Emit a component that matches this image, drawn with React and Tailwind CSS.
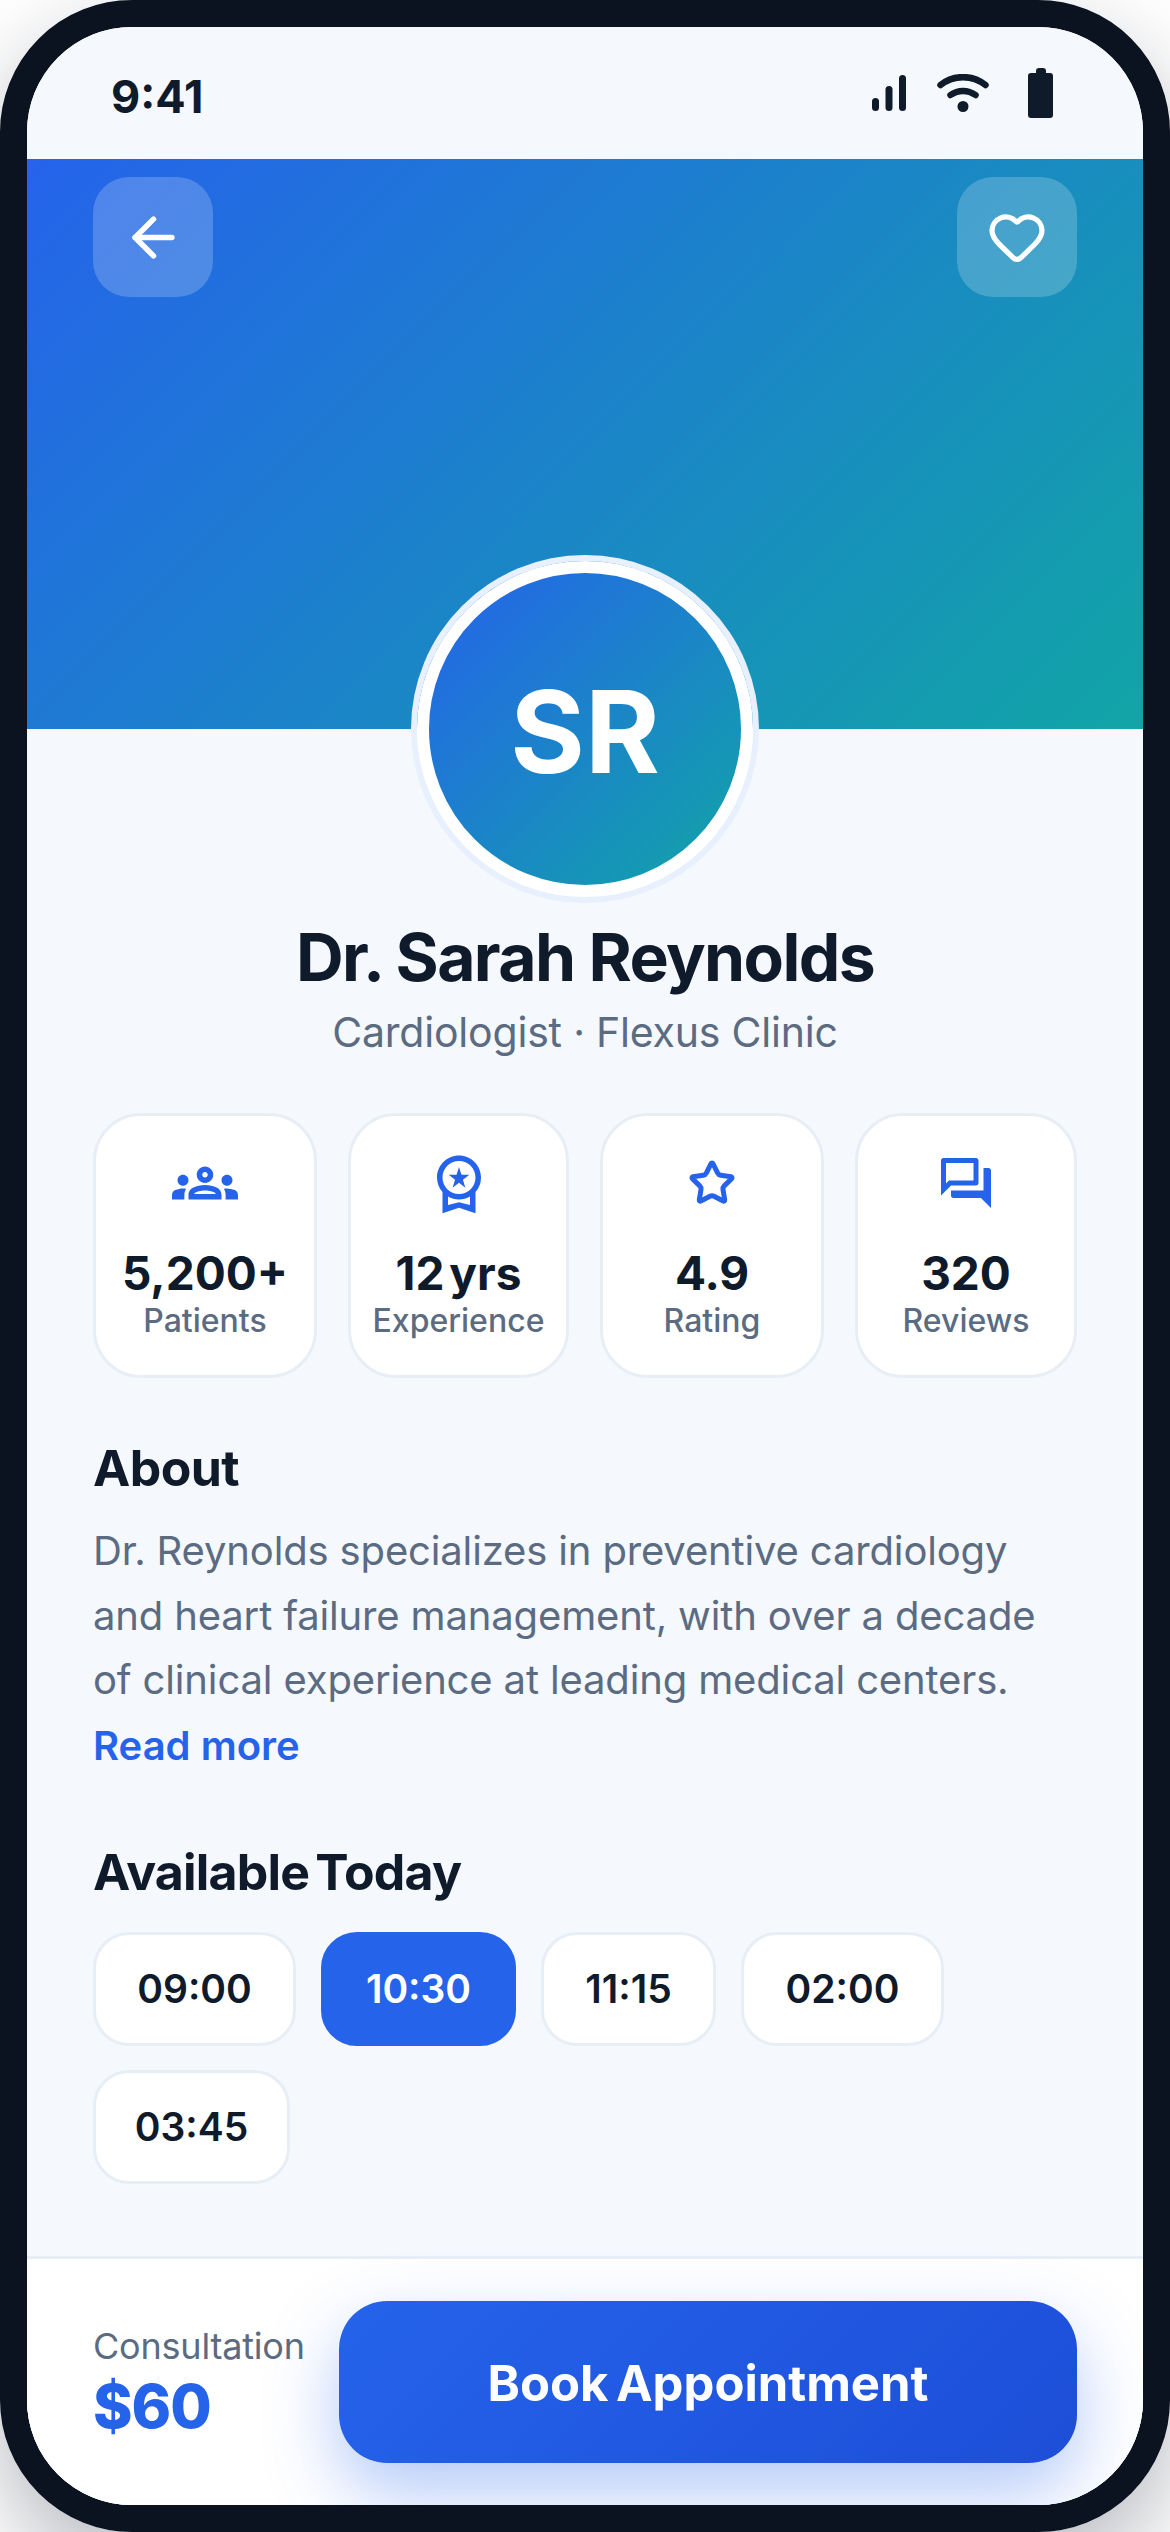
import { ArrowLeft, Heart, Star } from 'lucide-react';
import { MdOutlineGroups, MdOutlineWorkspacePremium, MdOutlineForum } from 'react-icons/md';

const stats = [
  { icon: <MdOutlineGroups className="h-[66px] w-[66px]" />, value: '5,200+', label: 'Patients' },
  { icon: <MdOutlineWorkspacePremium className="h-[66px] w-[66px]" />, value: '12 yrs', label: 'Experience' },
  { icon: <Star className="h-[48px] w-[48px]" strokeWidth={2.5} />, value: '4.9', label: 'Rating' },
  { icon: <MdOutlineForum className="h-[60px] w-[60px]" />, value: '320', label: 'Reviews' },
];

const slots = [
  { time: '09:00', width: 'w-[203px]' },
  { time: '10:30', width: 'w-[195px]' },
  { time: '11:15', width: 'w-[175px]' },
  { time: '02:00', width: 'w-[203px]' },
  { time: '03:45', width: 'w-[197px]' },
];

function StatusIcons() {
  return (
    <div className="flex items-center text-[#0f1a2b]">
      <svg viewBox="0 0 34 36" className="h-[36px] w-[34px]" fill="currentColor">
        <rect x="0" y="23" width="7" height="13" rx="3.5" />
        <rect x="13.5" y="11" width="7" height="25" rx="3.5" />
        <rect x="27" y="0" width="7" height="36" rx="3.5" />
      </svg>
      <svg viewBox="0 0 52 38" className="ml-[31px] h-[38px] w-[52px]" fill="none" stroke="currentColor" strokeWidth="6.5" strokeLinecap="round">
        <path d="M3.5 11C16.5 0.5 35.5 0.5 48.5 11" />
        <path d="M13.5 21C21 15.5 31 15.5 38.5 21" />
        <circle cx="26" cy="32.5" r="5.5" fill="currentColor" stroke="none" />
      </svg>
      <svg viewBox="0 0 25 50" className="ml-[39px] h-[50px] w-[25px]" fill="currentColor">
        <rect x="8" y="0" width="10" height="8" rx="3" />
        <rect x="0" y="5" width="25" height="45" rx="3" />
      </svg>
    </div>
  );
}

export default function App() {
  return (
    <div className="h-[2532px] w-[1170px] overflow-hidden bg-white font-['Inter',sans-serif]">
      <div className="h-[2532px] w-[1170px] rounded-[132px] border-[27px] border-[#0b1320] shadow-[0_36px_90px_rgba(15,23,42,0.3)]">
        <div className="flex h-full flex-col overflow-hidden rounded-[105px] bg-[#f5f8fd]">
          {/* Status bar */}
          <div className="flex h-[132px] shrink-0 items-center justify-between pl-[84px] pr-[90px] text-[#0f1a2b]">
            <span className="pt-[7px] text-[45px] font-bold">9:41</span>
            <StatusIcons />
          </div>

          {/* Hero */}
          <div className="relative h-[570px] shrink-0 bg-[linear-gradient(135deg,#2563eb,#11a5a6)]">
            <div className="flex items-start justify-between px-[66px] pt-[18px]">
              <button className="flex h-[120px] w-[120px] items-center justify-center rounded-[36px] bg-white/20 text-white">
                <ArrowLeft className="h-[63px] w-[63px]" strokeWidth={2.1} />
              </button>
              <button className="flex h-[120px] w-[120px] items-center justify-center rounded-[36px] bg-white/20 text-white">
                <Heart className="h-[60px] w-[60px]" strokeWidth={2.1} />
              </button>
            </div>
            <div className="absolute left-1/2 top-[402px] flex h-[336px] w-[336px] -translate-x-1/2 items-center justify-center rounded-full border-[12px] border-white bg-[linear-gradient(135deg,#2563eb,#11a5a6)] pt-[4px] text-[114px] font-bold text-white shadow-[0_0_0_6px_#e8f0fe]">
              SR
            </div>
          </div>

          {/* Name */}
          <div className="mt-[185px] flex shrink-0 flex-col items-center">
            <h1 className="text-[66px] font-bold leading-[87px] tracking-[-1.6px] text-[#0f1a2b]">Dr. Sarah Reynolds</h1>
            <p className="text-[41px] leading-[62px] tracking-[-0.2px] text-[#5b6b82]">Cardiologist · Flexus Clinic</p>
          </div>

          {/* Stats */}
          <div className="mx-[66px] mt-[50px] grid shrink-0 grid-cols-[224px_221px_224px_222px] justify-between">
            {stats.map(s => (
              <div key={s.label} className="flex h-[265px] flex-col items-center rounded-[48px] border-[3px] border-[#e8eef6] bg-white pt-[34px]">
                <div className="flex h-[66px] items-center justify-center text-[#2563eb]">{s.icon}</div>
                <p className="mt-[30px] text-[46px] font-bold leading-[54px] [word-spacing:-6px] text-[#0f1a2b]">{s.value}</p>
                <p className="text-[32px] font-medium leading-[42px] text-[#5b6b82]">{s.label}</p>
              </div>
            ))}
          </div>

          {/* About */}
          <div className="mx-[66px] mt-[57px] shrink-0">
            <h2 className="text-[50px] font-bold leading-[66px] tracking-[-0.6px] text-[#0f1a2b]">About</h2>
            <p className="mt-[18px] text-[40px] leading-[64.5px] tracking-[-0.15px] text-[#5b6b82]">
              Dr. Reynolds specializes in preventive cardiology and heart failure management, with over a decade of clinical experience at leading medical centers.
            </p>
            <p className="text-[40px] font-semibold leading-[66px] text-[#2563eb]">Read more</p>
          </div>

          {/* Slots */}
          <div className="mx-[66px] mt-[60px] shrink-0">
            <h2 className="text-[50px] font-bold leading-[66px] tracking-[-0.8px] [word-spacing:-5px] text-[#0f1a2b]">Available Today</h2>
            <div className="mt-[27px] flex flex-wrap gap-x-[25px] gap-y-[24px]">
              {slots.map(s => (
                <div
                  key={s.time}
                  className={
                    s.time === '10:30'
                      ? `flex h-[114px] ${s.width} items-center justify-center rounded-[36px] border-[3px] border-[#2563eb] bg-[#2563eb] pt-[2px] text-[39px] font-semibold text-white`
                      : `flex h-[114px] ${s.width} items-center justify-center rounded-[36px] border-[3px] border-[#e8eef6] bg-white pt-[2px] text-[39px] font-semibold text-[#0f1a2b]`
                  }
                >
                  {s.time}
                </div>
              ))}
            </div>
          </div>

          {/* Footer */}
          <div className="mt-auto flex shrink-0 items-center gap-[36px] border-t-[3px] border-[#e8eef6] bg-white px-[66px] py-[42px]">
            <div className="w-[210px] shrink-0">
              <p className="text-[36px] leading-[48px] tracking-[-0.2px] text-[#5b6b82]">Consultation</p>
              <p className="text-[60px] font-extrabold leading-[72px] tracking-[-1px] text-[#2563eb]">$60</p>
            </div>
            <button className="flex h-[162px] flex-1 items-center justify-center rounded-[48px] bg-[linear-gradient(135deg,#2563eb,#1d4ed8)] pt-[3px] text-[49px] font-bold [word-spacing:-4px] text-white shadow-[0_30px_72px_rgba(37,99,235,0.35)]">
              Book Appointment
            </button>
          </div>
        </div>
      </div>
    </div>
  );
}
